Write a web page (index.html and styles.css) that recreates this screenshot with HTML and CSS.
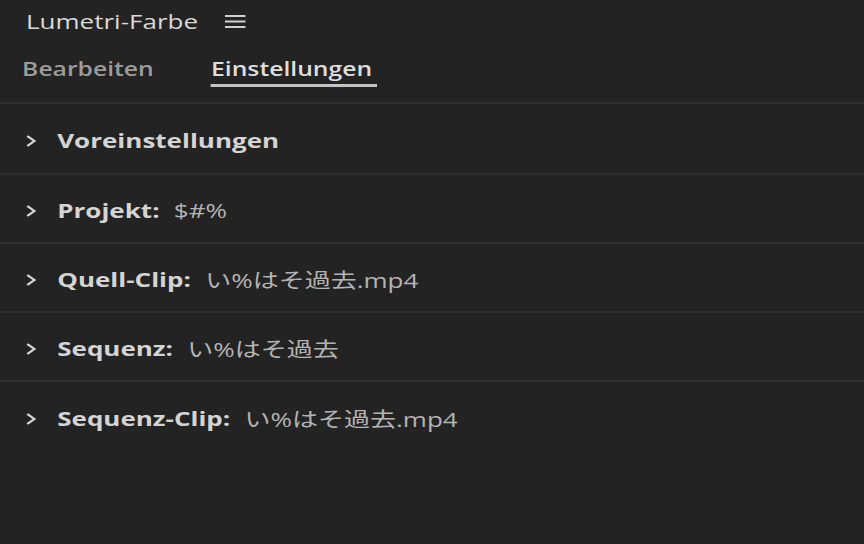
FILE: index.html
```html
<!DOCTYPE html>
<html lang="de">
<head>
<meta charset="utf-8">
<title>Lumetri-Farbe</title>
<link rel="stylesheet" href="styles.css">
</head>
<body>
<div class="panel">
  <header class="header">
    <div class="title-row">
      <span class="title">Lumetri-Farbe</span>
      <svg class="menu" width="16" height="13" viewBox="0 0 16 13"><rect x="0" y="0" width="16" height="2" fill="#cfcfcf"/><rect x="0" y="5.5" width="16" height="2" fill="#cfcfcf"/><rect x="0" y="11" width="16" height="2" fill="#cfcfcf"/></svg>
    </div>
    <nav class="tabs">
      <span class="tab">Bearbeiten</span>
      <span class="tab active">Einstellungen</span>
    </nav>
  </header>
  <section class="row first">
    <svg class="chev" width="8" height="14" viewBox="0 0 8 14"><path d="M1 2 L6.5 7 L1 12" fill="none" stroke="#d6d6d6" stroke-width="1.9"/></svg>
    <span class="label">Voreinstellungen</span>
  </section>
  <section class="row">
    <svg class="chev" width="8" height="14" viewBox="0 0 8 14"><path d="M1 2 L6.5 7 L1 12" fill="none" stroke="#d6d6d6" stroke-width="1.9"/></svg>
    <span class="label">Projekt:</span><span class="value">$#%</span>
  </section>
  <section class="row">
    <svg class="chev" width="8" height="14" viewBox="0 0 8 14"><path d="M1 2 L6.5 7 L1 12" fill="none" stroke="#d6d6d6" stroke-width="1.9"/></svg>
    <span class="label">Quell-Clip:</span><span class="value">い%はそ過去.mp4</span>
  </section>
  <section class="row">
    <svg class="chev" width="8" height="14" viewBox="0 0 8 14"><path d="M1 2 L6.5 7 L1 12" fill="none" stroke="#d6d6d6" stroke-width="1.9"/></svg>
    <span class="label">Sequenz:</span><span class="value">い%はそ過去</span>
  </section>
  <section class="row last">
    <svg class="chev" width="8" height="14" viewBox="0 0 8 14"><path d="M1 2 L6.5 7 L1 12" fill="none" stroke="#d6d6d6" stroke-width="1.9"/></svg>
    <span class="label">Sequenz-Clip:</span><span class="value">い%はそ過去.mp4</span>
  </section>
</div>
</body>
</html>
```
FILE: styles.css
```css
* { box-sizing: border-box; }
html, body {
  margin: 0;
  padding: 0;
  background: #232323;
  width: 864px;
  height: 544px;
  overflow: hidden;
}
body {
  font-family: "Open Sans", "Noto Sans CJK JP", sans-serif;
  color: #d4d4d4;
}
/* the panel is rendered horizontally stretched, like the reference */
.panel {
  width: 665px;
  display: flex;
  flex-direction: column;
  transform: scaleX(1.3);
  transform-origin: 0 0;
}
.header {
  height: 104px;
  border-bottom: 2px solid #2f2f2f;
  display: flex;
  flex-direction: column;
}
.title-row {
  height: 42px;
  display: flex;
  align-items: center;
  padding-left: 20px;
  gap: 21px;
}
.title {
  font-size: 20px;
  color: #d8d8d8;
}
.menu { margin-top: 1px; }
.tabs {
  display: flex;
  padding-left: 17px;
  gap: 40px;
  height: 45px;
  align-items: stretch;
}
.tab {
  font-size: 19px;
  font-weight: 600;
  color: #9c9c9c;
  display: flex;
  align-items: center;
  padding: 11px 4px 0 0;
  border-bottom: 3px solid transparent;
}
.tab.active {
  color: #dedede;
  border-bottom-color: #c4c4c4;
}
.row {
  height: 69px;
  padding-top: 4px;
  border-bottom: 2px solid #2f2f2f;
  display: flex;
  align-items: center;
  padding-left: 20px;
}
.row.first { height: 71px; }
.row.last { border-bottom: none; }
.chev { margin-right: 16px; }
.label {
  font-size: 20px;
  font-weight: 700;
  color: #d4d4d4;
  margin-right: 11px;
}
.value {
  font-size: 20px;
  color: #b3b3b3;
}
```
